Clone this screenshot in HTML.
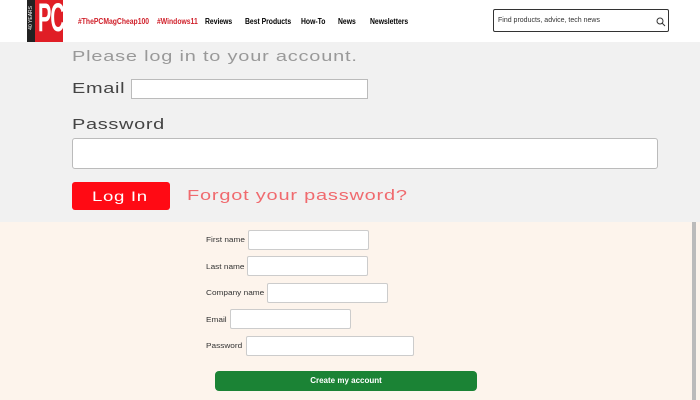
<!DOCTYPE html><html><head><style>
body{margin:0;width:700px;height:400px;overflow:hidden;font-family:"Liberation Sans",sans-serif;background:#fdf4ec;position:relative}
.a{position:absolute}
.hdr{left:0;top:0;width:700px;height:42px;background:#fff}
.nav{top:17px;font-size:8px;font-weight:bold;transform:scaleX(.85);transform-origin:left;white-space:nowrap}
.gray{left:0;top:42px;width:700px;height:180px;background:#f1f1f1}
.w{transform:scaleX(1.33);transform-origin:left;white-space:nowrap}
.lbl{color:#444;font-size:15px;letter-spacing:.5px}
.inp{background:#fff;border:1px solid #bbb}
.sl{font-size:7.5px;color:#333;transform:scaleX(1.1);transform-origin:left;white-space:nowrap}
.si{background:#fff;border:1px solid #ccc;border-radius:2px;height:18px}
</style></head><body>
<div class="a hdr"></div>
<div class="a" style="left:27px;top:0;width:8px;height:42px;background:#222"></div>
<div class="a" style="left:28px;top:6px;color:#fff;font-size:5px;writing-mode:vertical-rl;transform:rotate(180deg)">40 YEARS</div>
<div class="a" style="left:35px;top:0;width:28px;height:42px;background:#e01e26;overflow:hidden"><div style="color:#fff;font-weight:bold;font-size:40px;line-height:40px;letter-spacing:-2px;transform:scaleX(.5);transform-origin:left;margin-left:3px;margin-top:-2px">PC</div></div>
<div class="a nav" style="left:78px;color:#d0202a">#ThePCMagCheap100</div>
<div class="a nav" style="left:157px;color:#d0202a">#Windows11</div>
<div class="a nav" style="left:205px">Reviews</div>
<div class="a nav" style="left:245px">Best Products</div>
<div class="a nav" style="left:301px">How-To</div>
<div class="a nav" style="left:338px">News</div>
<div class="a nav" style="left:370px">Newsletters</div>
<div class="a" style="left:493px;top:9px;width:176px;height:23px;border:1px solid #333;border-radius:2px;box-sizing:border-box"></div>
<div class="a" style="left:498px;top:17px;font-size:7px;color:#333">Find products, advice, tech news</div>
<svg class="a" style="left:656px;top:17px" width="10" height="10"><circle cx="4" cy="4" r="3" fill="none" stroke="#333"/><line x1="6" y1="6" x2="9" y2="9" stroke="#333"/></svg>
<div class="a gray"></div>
<div class="a w" style="left:72px;top:48px;font-size:15px;color:#999;letter-spacing:.6px">Please log in to your account.</div>
<div class="a lbl w" style="left:72px;top:80px">Email</div>
<div class="a inp" style="left:131px;top:79px;width:235px;height:18px"></div>
<div class="a lbl w" style="left:72px;top:116px">Password</div>
<div class="a inp" style="left:72px;top:138px;width:584px;height:29px;border-radius:3px"></div>
<div class="a" style="left:72px;top:182px;width:98px;height:28px;background:#ff0a14;border-radius:3px"></div>
<div class="a w" style="left:92px;top:188px;color:#fff;font-size:14px;letter-spacing:.5px">Log In</div>
<div class="a w" style="left:187px;top:187px;font-size:15px;color:#f06a6e;letter-spacing:.6px">Forgot your password?</div>
<div class="a" style="left:692px;top:222px;width:4px;height:178px;background:#bbb"></div>
<div class="a sl" style="left:206px;top:235px">First name</div><div class="a si" style="left:248px;top:230px;width:119px"></div>
<div class="a sl" style="left:206px;top:262px">Last name</div><div class="a si" style="left:247px;top:256px;width:119px"></div>
<div class="a sl" style="left:206px;top:288px">Company name</div><div class="a si" style="left:267px;top:283px;width:119px"></div>
<div class="a sl" style="left:206px;top:315px">Email</div><div class="a si" style="left:230px;top:309px;width:119px"></div>
<div class="a sl" style="left:206px;top:341px">Password</div><div class="a si" style="left:246px;top:336px;width:166px"></div>
<div class="a" style="left:215px;top:371px;width:262px;height:20px;background:#1b8335;border-radius:4px;color:#fff;font-size:8px;font-weight:bold;text-align:center;line-height:20px">Create my account</div>
</body></html>
